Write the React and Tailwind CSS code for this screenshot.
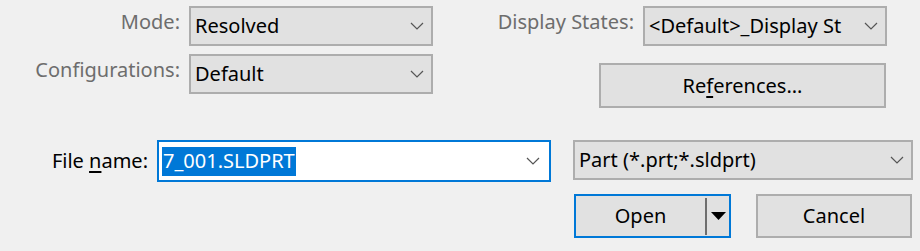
import React from 'react';

function Chevron() {
  return (
    <svg width="14" height="8" viewBox="0 0 14 8" className="shrink-0">
      <path d="M1 1 L7 7 L13 1" fill="none" stroke="#555555" strokeWidth="1.2" />
    </svg>
  );
}

function Select({ value, width }) {
  return (
    <div className={`${width} h-[40px] bg-[#e1e1e1] border-2 border-[#adadad] flex items-center justify-between pl-[4px] pr-[7px]`}>
      <span className="text-black whitespace-nowrap leading-normal">{value}</span>
      <Chevron />
    </div>
  );
}

export default function App() {
  return (
    <div
      className="w-[920px] h-[251px] bg-[#f0f0f0] overflow-hidden text-[20px] leading-none"
      style={{ fontFamily: '"Noto Sans", "Open Sans", sans-serif' }}
    >
      {/* Top options */}
      <div className="flex pt-[6px]">
        <div className="flex flex-col gap-[8px]">
          <div className="flex items-center">
            <span className="w-[180px] text-right text-[#6d6d6d] mb-[9px]">Mode:</span>
            <div className="ml-[9px]">
              <Select value="Resolved" width="w-[244px]" />
            </div>
          </div>
          <div className="flex items-center">
            <span className="w-[180px] text-right text-[#6d6d6d] mb-[9px]">Configurations:</span>
            <div className="ml-[9px]">
              <Select value="Default" width="w-[244px]" />
            </div>
          </div>
        </div>

        <div className="flex flex-col">
          <div className="flex items-center">
            <span className="w-[201px] text-right text-[#6d6d6d] mb-[9px]">Display States:</span>
            <div className="ml-[9px]">
              <Select value="<Default>_Display St" width="w-[244px]" />
            </div>
          </div>
          <button className="ml-[166px] mt-[17px] w-[287px] h-[45px] bg-[#e1e1e1] border-2 border-[#adadad] text-black">
            Re<u className="underline-offset-[3px]">f</u>erences...
          </button>
        </div>
      </div>

      {/* File name row */}
      <div className="flex items-start mt-[32px]">
        <span className="w-[148px] h-[42px] flex items-center justify-end text-black">
          File&nbsp;<u className="underline-offset-[3px]">n</u>ame:
        </span>
        <div className="ml-[9px] w-[394px] h-[42px] bg-white border-2 border-[#0078d7] flex items-center justify-between pl-[3px] pr-[9px]">
          <span className="bg-[#0078d7] text-white h-[29px] flex items-center px-[1px]">7_001.SLDPRT</span>
          <Chevron />
        </div>
        <div className="ml-[22px]">
          <Select value="Part (*.prt;*.sldprt)" width="w-[340px]" />
        </div>
      </div>

      {/* Buttons */}
      <div className="flex mt-[12px] ml-[574px] gap-[25px]">
        <div className="w-[157px] h-[44px] bg-[#e1e1e1] border-2 border-[#0078d7] flex items-center">
          <span className="w-[129px] text-center text-black">Open</span>
          <div className="w-[2px] h-[37px] bg-[#6e6e6e]" />
          <div className="flex-1 flex justify-center">
            <svg width="15" height="8" viewBox="0 0 15 8">
              <path d="M0 0 L15 0 L7.5 8 Z" fill="#000" />
            </svg>
          </div>
        </div>
        <button className="w-[156px] h-[44px] bg-[#e1e1e1] border-2 border-[#adadad] text-black">Cancel</button>
      </div>
    </div>
  );
}
